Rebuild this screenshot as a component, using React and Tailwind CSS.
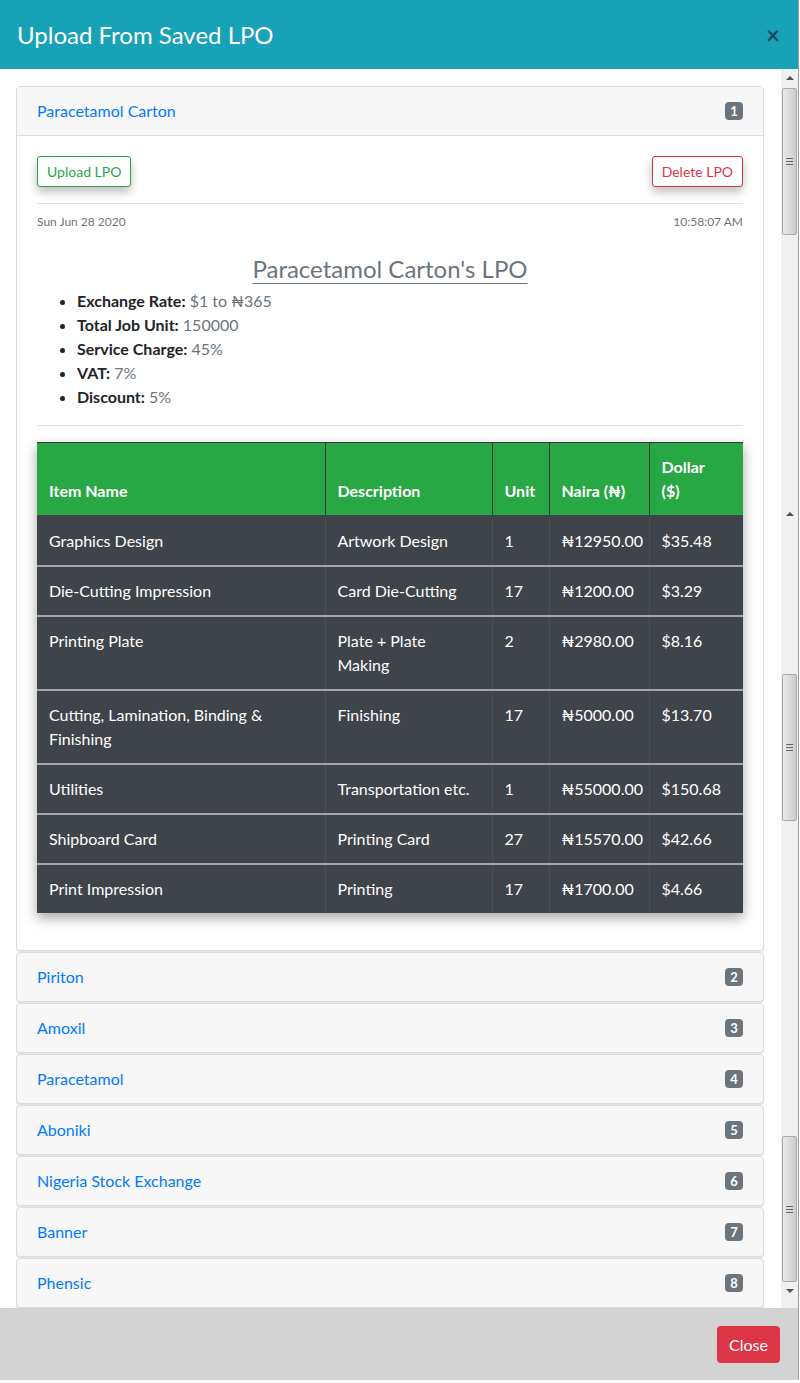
import React from 'react'

const items = [
  { name: 'Graphics Design', desc: 'Artwork Design', unit: '1', naira: '₦12950.00', dollar: '$35.48' },
  { name: 'Die-Cutting Impression', desc: 'Card Die-Cutting', unit: '17', naira: '₦1200.00', dollar: '$3.29' },
  { name: 'Printing Plate', desc: 'Plate + Plate Making', unit: '2', naira: '₦2980.00', dollar: '$8.16' },
  { name: 'Cutting, Lamination, Binding & Finishing', desc: 'Finishing', unit: '17', naira: '₦5000.00', dollar: '$13.70' },
  { name: 'Utilities', desc: 'Transportation etc.', unit: '1', naira: '₦55000.00', dollar: '$150.68' },
  { name: 'Shipboard Card', desc: 'Printing Card', unit: '27', naira: '₦15570.00', dollar: '$42.66' },
  { name: 'Print Impression', desc: 'Printing', unit: '17', naira: '₦1700.00', dollar: '$4.66' },
]

const others = ['Piriton', 'Amoxil', 'Paracetamol', 'Aboniki', 'Nigeria Stock Exchange', 'Banner', 'Phensic']

const Badge = ({ n }) => (
  <span className="inline-flex h-[18px] min-w-[18px] items-center justify-center rounded-[4px] bg-[#6c757d] px-[5px] text-[13px] font-bold leading-none text-white">
    {n}
  </span>
)

const Thumb = ({ h }) => (
  <div
    className="mx-[1px] flex flex-col items-center justify-center gap-[2px] rounded-[2px] border border-[#a9a9a9] bg-gradient-to-r from-[#e8e8e8] via-[#dcdcdc] to-[#c9c9c9]"
    style={{ height: h }}
  >
    <div className="h-px w-[7px] bg-[#666]" />
    <div className="h-px w-[7px] bg-[#666]" />
    <div className="h-px w-[7px] bg-[#666]" />
  </div>
)

const Arrow = ({ up }) => (
  <div className="flex h-[17px] items-center justify-center">
    <div
      className={
        up
          ? 'h-0 w-0 border-x-[4px] border-b-[4px] border-x-transparent border-b-[#505050]'
          : 'h-0 w-0 border-x-[4px] border-t-[4px] border-x-transparent border-t-[#505050]'
      }
    />
  </div>
)

// stitched scrollbar as it appears in the capture
const ScrollStrip = () => (
  <div className="flex w-[17px] shrink-0 flex-col bg-[#f0f0f0]">
    <Arrow up />
    <div className="h-[2px]" />
    <Thumb h={147} />
    <div className="h-[270px]" />
    <Arrow up />
    <div className="h-[152px]" />
    <Thumb h={147} />
    <div className="h-[315px]" />
    <Thumb h={146} />
    <Arrow />
  </div>
)

const LpoTable = () => (
  <table className="w-full table-fixed border-collapse text-[16px] leading-6 shadow-[0_5px_12px_rgba(0,0,0,0.35)]">
    <thead>
      <tr className="border-t border-b-2 border-t-[#32383e] border-b-[#3f434a] bg-[#28a745] text-left align-bottom text-white">
        <th className="w-[288px] px-3 py-3 font-bold">Item Name</th>
        <th className="w-[167px] border-l border-[#32383e] px-3 py-3 font-bold">Description</th>
        <th className="w-[57px] border-l border-[#32383e] px-3 py-3 font-bold">Unit</th>
        <th className="w-[100px] border-l border-[#32383e] px-3 py-3 font-bold">Naira (₦)</th>
        <th className="border-l border-[#32383e] px-3 py-3 font-bold">
          Dollar
          <br />
          ($)
        </th>
      </tr>
    </thead>
    <tbody>
      {items.map((r, i) => (
        <tr key={i} className="border-t-2 border-[#a3a5a8] bg-[#3f434a] align-top text-white first:border-t-0">
          <td className="px-3 py-3">{r.name}</td>
          <td className="border-l border-[#4a4e55] px-3 py-3">{r.desc}</td>
          <td className="border-l border-[#4a4e55] px-3 py-3">{r.unit}</td>
          <td className="border-l border-[#4a4e55] px-3 py-3">{r.naira}</td>
          <td className="border-l border-[#4a4e55] px-3 py-3">{r.dollar}</td>
        </tr>
      ))}
    </tbody>
  </table>
)

export default function App() {
  return (
    <div className="h-[1383px] w-[800px] bg-white font-['Lato','Liberation_Sans',sans-serif] text-[#212529]">
      <div className="flex w-[799px] flex-col border-r border-[#9e9e9e]">
        {/* Modal header */}
        <div className="flex h-[69px] items-center justify-between bg-[#17a2b8] pl-[17px] pr-[18px]">
          <h2 className="text-[24px] leading-none text-white">Upload From Saved LPO</h2>
          <span className="text-[24px] font-bold leading-none text-[#1c4d57]">×</span>
        </div>

        {/* Modal body */}
        <div className="flex h-[1239px]">
          <div className="flex flex-1 flex-col pl-4 pr-[17px] pt-[17px]">
            {/* Expanded card */}
            <div className="mb-px rounded-[4px] border border-[#dcdcdc] bg-white shadow-[0_1px_1px_rgba(0,0,0,0.1)]">
              <div className="flex items-center justify-between border-b border-[#dcdcdc] bg-[#f7f7f7] px-5 py-3 leading-6">
                <span className="text-[16px] text-[#007bff]">Paracetamol Carton</span>
                <Badge n={1} />
              </div>
              <div className="px-5 pb-[37px] pt-5">
                <div className="flex justify-between">
                  <button className="h-[31px] rounded-[3px] border border-[#28a745] bg-white px-[9px] text-[14px] text-[#28a745] shadow-[0_5px_10px_rgba(0,0,0,0.25)]">
                    Upload LPO
                  </button>
                  <button className="h-[31px] rounded-[3px] border border-[#dc3545] bg-white px-[9px] text-[14px] text-[#dc3545] shadow-[0_5px_10px_rgba(0,0,0,0.25)]">
                    Delete LPO
                  </button>
                </div>
                <hr className="mt-4 border-[#e2e2e2]" />
                <div className="mt-[9px] flex justify-between text-[12px] leading-[18px] text-[#6c757d]">
                  <span>Sun Jun 28 2020</span>
                  <span>10:58:07 AM</span>
                </div>
                <h3 className="mt-[23px] text-center text-[24px] leading-[29px] text-[#6c757d] underline underline-offset-[5px] decoration-1">
                  Paracetamol Carton's LPO
                </h3>
                <ul className="mt-[6px] list-disc pl-10 text-[16px] leading-6">
                  <li><b>Exchange Rate:</b> <span className="text-[#6c757d]">$1 to ₦365</span></li>
                  <li><b>Total Job Unit:</b> <span className="text-[#6c757d]">150000</span></li>
                  <li><b>Service Charge:</b> <span className="text-[#6c757d]">45%</span></li>
                  <li><b>VAT:</b> <span className="text-[#6c757d]">7%</span></li>
                  <li><b>Discount:</b> <span className="text-[#6c757d]">5%</span></li>
                </ul>
                <hr className="mb-4 mt-4 border-[#e2e2e2]" />
                <LpoTable />
              </div>
            </div>

            {/* Collapsed cards */}
            {others.map((name, i) => (
              <div
                key={name}
                className="mb-px flex items-center justify-between rounded-[4px] border border-[#dcdcdc] bg-[#f7f7f7] px-5 py-3 leading-6 shadow-[0_1px_1px_rgba(0,0,0,0.12)]"
              >
                <span className="text-[16px] text-[#007bff]">{name}</span>
                <Badge n={i + 2} />
              </div>
            ))}
          </div>
          <ScrollStrip />
        </div>

        {/* Modal footer */}
        <div className="flex h-[72px] items-center justify-end border-t border-[#d0d0d0] bg-[#d3d3d3] pr-[18px]">
          <button className="h-[37px] rounded-[4px] bg-[#dc3545] px-3 text-[16px] text-white">Close</button>
        </div>
      </div>
    </div>
  )
}
